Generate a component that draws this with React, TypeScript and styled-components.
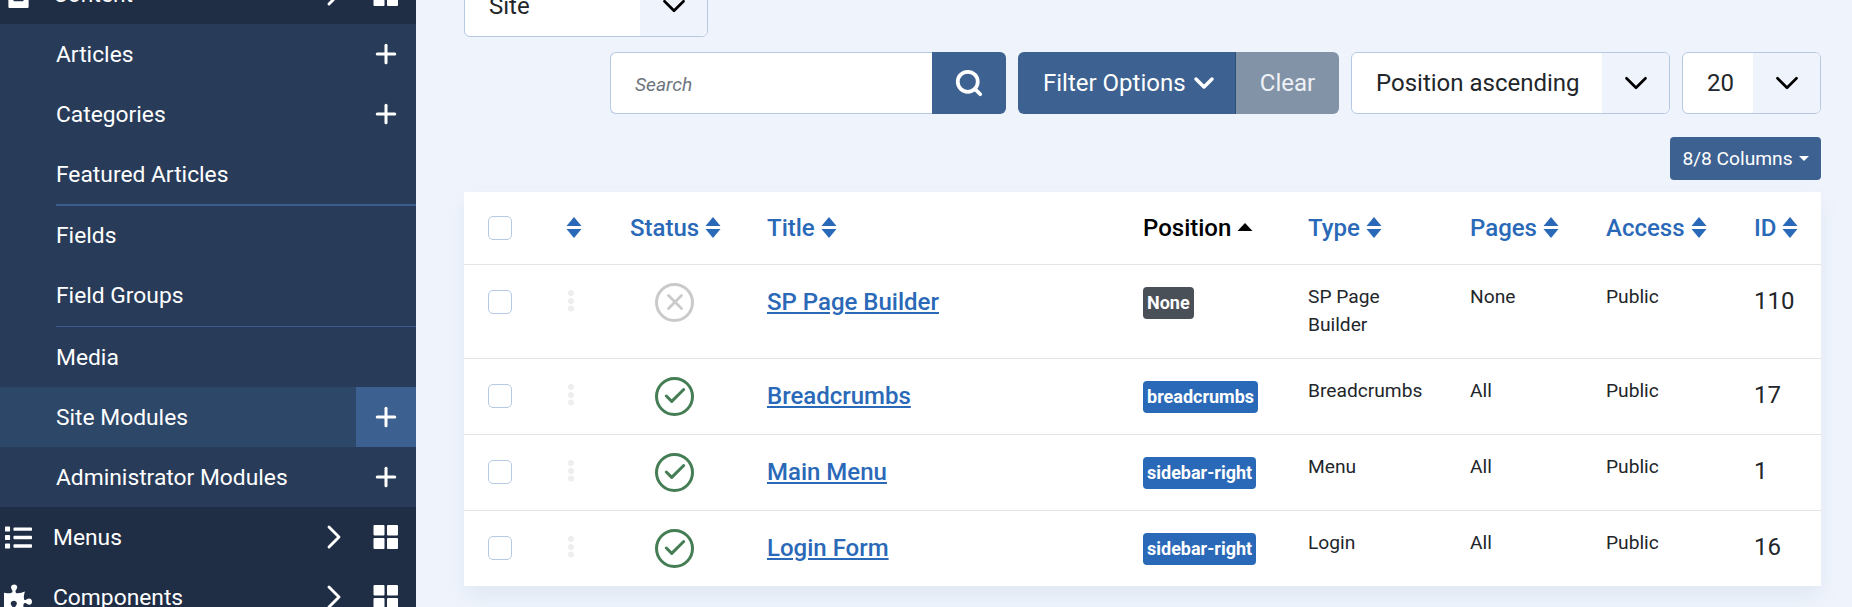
import React from 'react';
import styled, { createGlobalStyle } from 'styled-components';
import { Search, Plus, ChevronRight, ChevronDown, X, Check } from 'lucide-react';
import { FaList, FaPuzzlePiece, FaFileAlt } from 'react-icons/fa';

const GlobalStyle = createGlobalStyle`
  html, body {
    margin: 0;
    padding: 0;
    height: 607px;
    overflow: hidden;
    background: #eff4fc;
    font-family: Roboto, "Liberation Sans", sans-serif;
  }
`;

const Page = styled.div`
  display: flex;
  height: 607px;
  overflow: hidden;
`;

const Sidebar = styled.nav`
  width: 416px;
  flex: none;
  height: 607px;
  overflow: hidden;
  background: #1f2e45;
  color: #fff;
`;

const TopRow = styled.div<{ $clipped?: boolean }>`
  display: flex;
  align-items: center;
  height: 60px;
  margin-top: ${(p) => (p.$clipped ? '-36px' : '0')};
  font-size: 22.8px;
`;

const TopIcon = styled.span`
  width: 53px;
  flex: none;
  display: flex;
  justify-content: center;
  padding-right: 17px;
  box-sizing: border-box;
`;

const TopLabel = styled.span`
  flex: 1;
`;

const Chevron = styled.span`
  width: 40px;
  display: flex;
  justify-content: center;
  margin-right: 2px;
`;

const DashGrid = styled.span`
  width: 60px;
  display: flex;
  justify-content: center;
`;

const SubList = styled.div`
  background: #283c59;
`;

const SubRow = styled.div<{ $active?: boolean }>`
  display: flex;
  align-items: center;
  height: 60px;
  padding-left: 56px;
  font-size: 22.8px;
  background: ${(p) => (p.$active ? '#2d4769' : 'transparent')};
`;

const SubLabel = styled.span`
  flex: 1;
`;

const AddButton = styled.span<{ $active?: boolean }>`
  width: 60px;
  height: 60px;
  display: flex;
  align-items: center;
  justify-content: center;
  background: ${(p) => (p.$active ? '#3c6090' : 'transparent')};
`;

const Rule = styled.div<{ $size: number }>`
  height: ${(p) => p.$size}px;
  margin: ${(p) => (p.$size === 1 ? '1px 0 0 56px' : '0 0 -1px 56px')};
  background: #3b5c8e;
`;

const Main = styled.main`
  flex: 1;
  min-width: 0;
  padding: 0 31px 0 48px;
  overflow: hidden;
`;

const SiteSelect = styled.div`
  display: flex;
  width: 244px;
  height: 62px;
  margin-top: -25px;
  box-sizing: border-box;
  border: 1px solid #b5c9e4;
  border-radius: 6px;
  background: #fff;
  overflow: hidden;
  font-size: 24px;
  color: #22262a;
`;

const SelectText = styled.span`
  flex: 1;
  min-width: 0;
  padding-left: 24px;
  line-height: 60px;
  white-space: nowrap;
`;

const SelectArrow = styled.span`
  flex: none;
  width: 67px;
  display: flex;
  align-items: center;
  justify-content: center;
  background: #eff4fc;
  color: #000;
`;

const Toolbar = styled.div`
  display: flex;
  justify-content: flex-end;
  gap: 12px;
  height: 62px;
  margin-top: 15px;
`;

const SearchGroup = styled.div`
  display: flex;
  width: 396px;
`;

const SearchBox = styled.div`
  flex: 1;
  box-sizing: border-box;
  border: 1px solid #b5c9e4;
  border-right: 0;
  border-radius: 6px 0 0 6px;
  background: #fff;
  padding-left: 24px;
  line-height: 64px;
  font-size: 19.2px;
  font-style: italic;
  color: #6d757e;
`;

const SearchButton = styled.span`
  width: 74px;
  display: flex;
  align-items: center;
  justify-content: center;
  background: #3d6190;
  border-radius: 0 6px 6px 0;
  color: #fff;
`;

const FilterGroup = styled.div`
  display: flex;
  font-size: 24px;
  color: #fff;
`;

const FilterButton = styled.span`
  width: 218px;
  box-sizing: border-box;
  display: flex;
  align-items: center;
  padding-left: 25px;
  gap: 2px;
  background: #3d6190;
  border-right: 1px solid #2f4d75;
  border-radius: 6px 0 0 6px;
  white-space: nowrap;
`;

const ClearButton = styled.span`
  width: 103px;
  display: flex;
  align-items: center;
  justify-content: center;
  background: #8293a7;
  color: #eef1f5;
  border-radius: 0 6px 6px 0;
`;

const ToolSelect = styled(SiteSelect)<{ $width: number }>`
  width: ${(p) => p.$width}px;
  margin-top: 0;
`;

const ColumnsRow = styled.div`
  display: flex;
  justify-content: flex-end;
  margin-top: 23px;
`;

const ColumnsButton = styled.span`
  width: 151px;
  height: 43px;
  display: flex;
  align-items: center;
  justify-content: center;
  gap: 6px;
  border-radius: 4px;
  background: #3d6190;
  color: #fff;
  font-size: 19.2px;
  white-space: nowrap;
`;

const Caret = styled.span`
  width: 0;
  height: 0;
  border-left: 5px solid transparent;
  border-right: 5px solid transparent;
  border-top: 5px solid currentColor;
`;

const Table = styled.table`
  width: 1357px;
  margin-top: 12px;
  table-layout: fixed;
  border-collapse: collapse;
  background: #fff;
  box-shadow: 0 10px 20px rgba(60, 90, 140, 0.08);
`;

const Head = styled.th<{ $active?: boolean }>`
  height: 72px;
  box-sizing: border-box;
  padding: 0 0 0 24px;
  text-align: left;
  vertical-align: middle;
  font-size: 24px;
  font-weight: 500;
  white-space: nowrap;
  color: ${(p) => (p.$active ? '#000' : '#2a69b8')};
  border-bottom: 1px solid #e3e5e8;
`;

const SortIcon = styled.svg<{ $flush?: boolean }>`
  margin-left: ${(p) => (p.$flush ? '0' : '6px')};
  vertical-align: -2px;
`;

const SortUpIcon = styled(SortIcon)`
  vertical-align: 5px;
`;

const Cell = styled.td`
  padding: 18px 12px 0 24px;
  vertical-align: top;
  font-size: 19.2px;
  line-height: 28px;
  color: #22262a;
`;

const BodyRow = styled.tr<{ $h: number }>`
  height: ${(p) => p.$h}px;
  border-bottom: 1px solid #e3e3ea;
  &:last-child {
    border-bottom: 0;
  }
`;

const Checkbox = styled.span<{ $inRow?: boolean }>`
  display: block;
  width: 24px;
  height: 24px;
  margin-top: ${(p) => (p.$inRow ? '7px' : '0')};
  box-sizing: border-box;
  border: 1px solid #b5c9e4;
  border-radius: 5px;
  background: #fff;
`;

const Drag = styled.svg`
  display: block;
  margin: 7px 0 0 2px;
`;

const StatusIcon = styled.span<{ $on: boolean }>`
  width: 39px;
  height: 39px;
  margin-left: 25px;
  box-sizing: border-box;
  display: flex;
  align-items: center;
  justify-content: center;
  border-radius: 50%;
  border: 3px solid ${(p) => (p.$on ? '#457d54' : '#cacaca')};
  color: ${(p) => (p.$on ? '#457d54' : '#cacaca')};
`;

const TitleLink = styled.a`
  display: block;
  font-size: 24px;
  font-weight: 500;
  color: #2a69b8;
  text-decoration: underline;
  line-height: 38px;
`;

const Badge = styled.span<{ $none?: boolean }>`
  display: block;
  width: fit-content;
  margin-top: 4px;
  padding: 0 4px;
  height: 32px;
  line-height: 32px;
  border-radius: 4px;
  font-size: 18px;
  font-weight: 700;
  white-space: nowrap;
  color: #fff;
  background: ${(p) => (p.$none ? '#495057' : '#2a69b8')};
`;

const IdText = styled.span`
  font-size: 24px;
  line-height: 36px;
`;

const SortArrows = ({ flush }: { flush?: boolean }) => (
  <SortIcon $flush={flush} width="16" height="21" viewBox="0 0 16 21" fill="currentColor">
    <path d="M8 0l7.5 9H.5z" />
    <path d="M8 21l7.5-9H.5z" />
  </SortIcon>
);

const SortUp = () => (
  <SortUpIcon width="16" height="8" viewBox="0 0 16 8" fill="currentColor">
    <path d="M8 0l7.5 8H.5z" />
  </SortUpIcon>
);

const DragDots = () => (
  <Drag width="6" height="22" viewBox="0 0 6 22" fill="#eeeeee">
    <circle cx="3" cy="3" r="3" />
    <circle cx="3" cy="11" r="3" />
    <circle cx="3" cy="18.5" r="3" />
  </Drag>
);

const QuadGrid = () => (
  <svg width="26" height="24" viewBox="0 0 26 24" fill="#fff">
    <rect x="0.5" y="0" width="11" height="10.5" rx="1" />
    <rect x="14" y="0" width="11" height="10.5" rx="1" />
    <rect x="0.5" y="13" width="11" height="11" rx="1" />
    <rect x="14" y="13" width="11" height="11" rx="1" />
  </svg>
);

const subItems = [
  { label: 'Articles', add: true },
  { label: 'Categories', add: true },
  { label: 'Featured Articles', rule: 2 },
  { label: 'Fields' },
  { label: 'Field Groups', rule: 1 },
  { label: 'Media' },
  { label: 'Site Modules', add: true, active: true },
  { label: 'Administrator Modules', add: true },
];

const columns = [
  { label: 'Status' },
  { label: 'Title' },
  { label: 'Position', active: true },
  { label: 'Type' },
  { label: 'Pages' },
  { label: 'Access' },
  { label: 'ID' },
];

const widths = [78, 64, 137, 376, 165, 162, 136, 148, 91];

const rows = [
  { h: 94, on: false, title: 'SP Page Builder', position: 'None', type: 'SP Page Builder', pages: 'None', id: 110 },
  { h: 76, on: true, title: 'Breadcrumbs', position: 'breadcrumbs', type: 'Breadcrumbs', pages: 'All', id: 17 },
  { h: 76, on: true, title: 'Main Menu', position: 'sidebar-right', type: 'Menu', pages: 'All', id: 1 },
  { h: 76, on: true, title: 'Login Form', position: 'sidebar-right', type: 'Login', pages: 'All', id: 16 },
];

const App: React.FC = () => {
  return (
    <Page>
      <GlobalStyle />
      <Sidebar>
        <TopRow $clipped>
          <TopIcon><FaFileAlt size={27} /></TopIcon>
          <TopLabel>Content</TopLabel>
          <Chevron><ChevronRight size={40} strokeWidth={1.7} /></Chevron>
          <DashGrid><QuadGrid /></DashGrid>
        </TopRow>
        <SubList>
          {subItems.map((item) => (
            <React.Fragment key={item.label}>
              <SubRow $active={item.active}>
                <SubLabel>{item.label}</SubLabel>
                {item.add && (
                  <AddButton $active={item.active}>
                    <Plus size={30} strokeWidth={2.4} />
                  </AddButton>
                )}
              </SubRow>
              {item.rule && <Rule $size={item.rule} />}
            </React.Fragment>
          ))}
        </SubList>
        <TopRow>
          <TopIcon><FaList size={27} /></TopIcon>
          <TopLabel>Menus</TopLabel>
          <Chevron><ChevronRight size={40} strokeWidth={1.7} /></Chevron>
          <DashGrid><QuadGrid /></DashGrid>
        </TopRow>
        <TopRow>
          <TopIcon><FaPuzzlePiece size={28} /></TopIcon>
          <TopLabel>Components</TopLabel>
          <Chevron><ChevronRight size={40} strokeWidth={1.7} /></Chevron>
          <DashGrid><QuadGrid /></DashGrid>
        </TopRow>
      </Sidebar>
      <Main>
        <SiteSelect>
          <SelectText>Site</SelectText>
          <SelectArrow><ChevronDown size={38} strokeWidth={1.7} /></SelectArrow>
        </SiteSelect>
        <Toolbar>
          <SearchGroup>
            <SearchBox>Search</SearchBox>
            <SearchButton><Search size={30} strokeWidth={3} /></SearchButton>
          </SearchGroup>
          <FilterGroup>
            <FilterButton>Filter Options <ChevronDown size={32} strokeWidth={2.6} /></FilterButton>
            <ClearButton>Clear</ClearButton>
          </FilterGroup>
          <ToolSelect $width={319}>
            <SelectText>Position ascending</SelectText>
            <SelectArrow><ChevronDown size={38} strokeWidth={1.7} /></SelectArrow>
          </ToolSelect>
          <ToolSelect $width={139}>
            <SelectText>20</SelectText>
            <SelectArrow><ChevronDown size={38} strokeWidth={1.7} /></SelectArrow>
          </ToolSelect>
        </Toolbar>
        <ColumnsRow>
          <ColumnsButton>8/8 Columns <Caret /></ColumnsButton>
        </ColumnsRow>
        <Table>
          <colgroup>
            {widths.map((w, i) => (
              <col key={i} style={{ width: w }} />
            ))}
          </colgroup>
          <thead>
            <tr>
              <Head><Checkbox /></Head>
              <Head><SortArrows flush /></Head>
              {columns.map((c) => (
                <Head key={c.label} $active={c.active}>
                  {c.label}
                  {c.active ? <SortUp /> : <SortArrows />}
                </Head>
              ))}
            </tr>
          </thead>
          <tbody>
            {rows.map((r) => (
              <BodyRow key={r.id} $h={r.h}>
                <Cell><Checkbox $inRow /></Cell>
                <Cell><DragDots /></Cell>
                <Cell>
                  <StatusIcon $on={r.on}>
                    {r.on ? <Check size={26} strokeWidth={2.8} /> : <X size={26} strokeWidth={2.6} />}
                  </StatusIcon>
                </Cell>
                <Cell><TitleLink href="#">{r.title}</TitleLink></Cell>
                <Cell><Badge $none={r.position === 'None'}>{r.position}</Badge></Cell>
                <Cell>{r.type}</Cell>
                <Cell>{r.pages}</Cell>
                <Cell>Public</Cell>
                <Cell><IdText>{r.id}</IdText></Cell>
              </BodyRow>
            ))}
          </tbody>
        </Table>
      </Main>
    </Page>
  );
};

export default App;
